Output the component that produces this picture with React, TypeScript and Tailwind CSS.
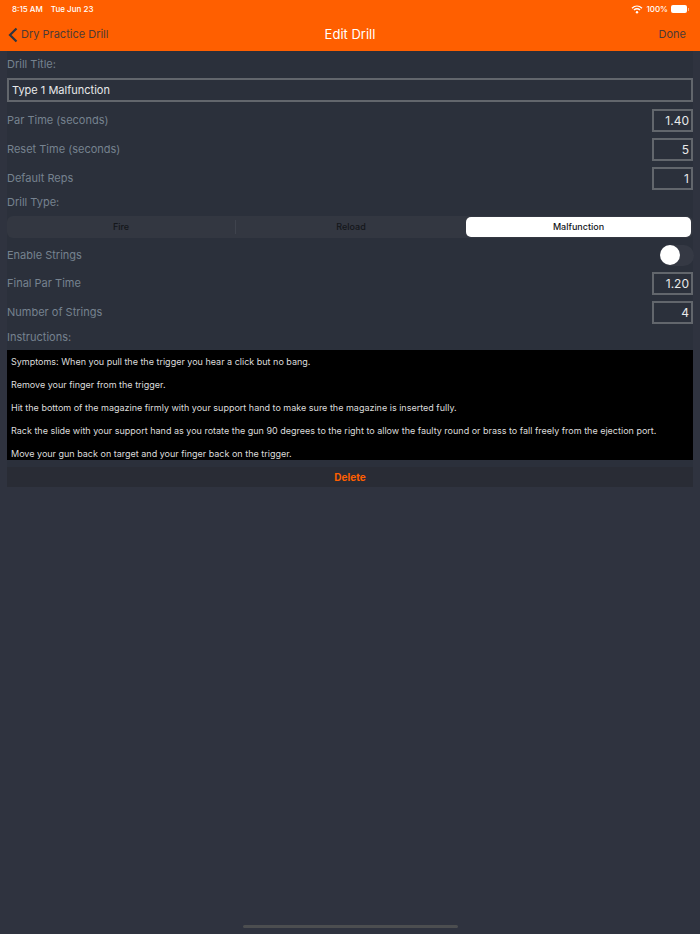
import React from 'react';

const font = "font-['Inter','Liberation_Sans',sans-serif]";

const instructions = [
  'Symptoms: When you pull the the trigger you hear a click but no bang.',
  'Remove your finger from the trigger.',
  'Hit the bottom of the magazine firmly with your support hand to make sure the magazine is inserted fully.',
  'Rack the slide with your support hand as you rotate the gun 90 degrees to the right to allow the faulty round or brass to fall freely from the ejection port.',
  'Move your gun back on target and your finger back on the trigger.',
];

function NumberRow({ label, value }: { label: string; value: string }) {
  return (
    <div className="flex h-[29px] items-center justify-between">
      <span className="text-[11px] text-[#76828f]">{label}</span>
      <div className="flex h-[23px] w-[41px] items-center justify-end border-2 border-[#62666c] pr-[2px] text-[12px] text-[#e8e9ea]">
        {value}
      </div>
    </div>
  );
}

function StatusBar() {
  return (
    <div className="flex h-[18px] items-center justify-between pl-[12px] pr-[11px] text-[8px] font-medium text-white">
      <div className="flex gap-[8px]">
        <span>8:15 AM</span>
        <span>Tue Jun 23</span>
      </div>
      <div className="flex items-center gap-[3px]">
        <svg width="12" height="9" viewBox="0 0 12 9" fill="none" stroke="white">
          <path d="M1 3.2C4 .4 8 .4 11 3.2" strokeWidth="1.4" />
          <path d="M2.9 5C4.8 3.4 7.2 3.4 9.1 5" strokeWidth="1.4" />
          <circle cx="6" cy="7.2" r="1.2" fill="white" stroke="none" />
        </svg>
        <span>100%</span>
        <div className="flex items-center">
          <div className="h-[8px] w-[16px] rounded-[2px] bg-white" />
          <div className="ml-[1px] h-[3px] w-[1px] bg-[#ffb380]" />
        </div>
      </div>
    </div>
  );
}

export default function App() {
  return (
    <div className={`flex h-[934px] w-[700px] flex-col overflow-hidden bg-[#2f333f] ${font}`}>
      <header className="h-[51px] bg-[#ff5f00]">
        <StatusBar />
        <div className="relative flex h-[33px] items-center justify-between pl-[8px] pr-[14px] text-[11px] text-[#4d3a35]">
          <div className="flex items-center gap-[3px]">
            <svg width="10" height="16" viewBox="0 0 10 16" fill="none" stroke="#2f3540" strokeWidth="2.2">
              <path d="M8.5 1.5 2 8l6.5 6.5" />
            </svg>
            <span>Dry Practice Drill</span>
          </div>
          <span className="absolute inset-x-0 text-center text-[13px] text-white">Edit Drill</span>
          <span>Done</span>
        </div>
      </header>

      <main className="mx-[7px] flex flex-col bg-[#2b303b]">
        <div className="flex h-[27px] items-center text-[11px] text-[#76828f]">Drill Title:</div>
        <div className="flex h-[24px] items-center border-2 border-[#62666c] pl-[3px] text-[11px] text-[#e8e9ea]">
          Type 1 Malfunction
        </div>
        <div className="mt-[4px]">
          <NumberRow label="Par Time (seconds)" value="1.40" />
          <NumberRow label="Reset Time (seconds)" value="5" />
          <NumberRow label="Default Reps" value="1" />
        </div>
        <div className="flex h-[18px] items-center text-[11px] text-[#76828f]">Drill Type:</div>
        <div className="mt-[5px] flex h-[22px] items-center rounded-[6px] bg-[#333741] text-[9px] font-medium text-[#14161a]">
          <div className="flex h-[14px] w-[229px] items-center justify-center border-r border-[#3f434d]">Fire</div>
          <div className="flex h-[14px] w-[230px] items-center justify-center">Reload</div>
          <div className="flex h-[20px] w-[225px] items-center justify-center rounded-[5px] bg-white text-[#14161a]">
            Malfunction
          </div>
        </div>
        <div className="flex h-[34px] items-center justify-between">
          <span className="text-[11px] text-[#76828f]">Enable Strings</span>
          <div className="-mr-[1px] flex h-[21px] w-[34px] items-center rounded-full bg-[#353944]">
            <div className="h-[20px] w-[20px] rounded-full bg-white" />
          </div>
        </div>
        <div className="-mt-[3px]">
          <NumberRow label="Final Par Time" value="1.20" />
          <NumberRow label="Number of Strings" value="4" />
        </div>
        <div className="flex h-[23px] items-center pb-[3px] text-[11px] text-[#76828f]">Instructions:</div>
        <div className="flex h-[110px] flex-col gap-[9px] overflow-hidden bg-black px-[4px] pt-[5px] text-[9px] leading-[14px] text-[#dcdcdc]">
          {instructions.map((line) => (
            <p key={line} className="whitespace-nowrap">
              {line}
            </p>
          ))}
        </div>
        <div className="h-[7px]" />
      </main>

      <div className="mx-[7px] flex h-[20px] items-center justify-center bg-[#292c35] text-[10px] font-bold text-[#ff5f00]">
        Delete
      </div>

      <div className="mt-auto mb-[6px] h-[3px] w-[215px] self-center rounded-full bg-[#4c4e50]" />
    </div>
  );
}
